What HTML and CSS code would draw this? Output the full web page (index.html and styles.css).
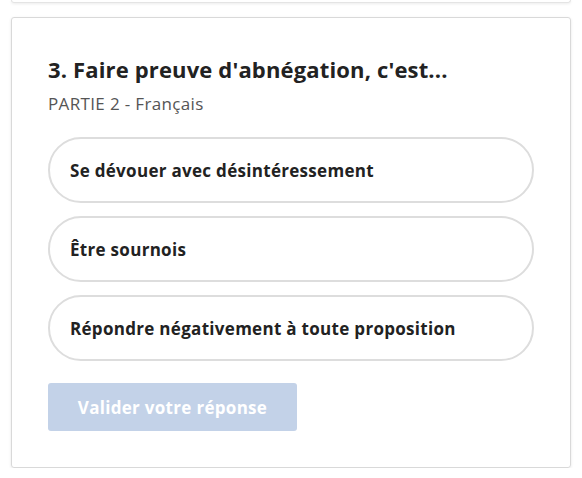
FILE: index.html
```html
<!DOCTYPE html>
<html lang="fr">
<head>
<meta charset="utf-8">
<link rel="stylesheet" href="styles.css">
</head>
<body>
<div class="prev-card"></div>
<section class="card">
  <h2 class="title">3. Faire preuve d'abnégation, c'est...</h2>
  <p class="subtitle">PARTIE 2 - Français</p>
  <div class="options">
    <button class="option">Se dévouer avec désintéressement</button>
    <button class="option">Être sournois</button>
    <button class="option">Répondre négativement à toute proposition</button>
  </div>
  <button class="submit" disabled>Valider votre réponse</button>
</section>
</body>
</html>
```
FILE: styles.css
```css
html, body {
  margin: 0;
  padding: 0;
  background: #fff;
  font-family: "Open Sans", "Noto Sans", sans-serif;
  color: #222;
}
.prev-card {
  height: 2px;
  margin: 0 11px;
  border: 1px solid #e4e4e4;
  border-top: none;
  border-radius: 0 0 3px 3px;
  box-shadow: 0 1px 3px rgba(0,0,0,0.08);
}
.card {
  margin: 14px 11px 0;
  border: 1px solid #d9d9d9;
  border-radius: 3px;
  box-shadow: 0 1px 3px rgba(0,0,0,0.1);
  padding: 37px 36px 36px;
  height: 451px;
  box-sizing: border-box;
}
.title {
  margin: 0;
  font-size: 22px;
  line-height: 28px;
  font-weight: 700;
  letter-spacing: 0.15px;
  color: #222;
}
.subtitle {
  margin: 10px 0 0;
  font-size: 17px;
  line-height: 22px;
  letter-spacing: 0.35px;
  color: #555;
}
.options {
  display: flex;
  flex-direction: column;
  gap: 13px;
  margin-top: 22px;
}
.option {
  height: 66px;
  border: 2px solid #ddd;
  border-radius: 33px;
  background: #fff;
  text-align: left;
  padding: 0 20px;
  font-family: inherit;
  font-size: 17px;
  font-weight: 700;
  letter-spacing: 0.3px;
  color: #222;
}
.submit {
  margin-top: 22px;
  width: 249px;
  height: 48px;
  border: none;
  border-radius: 3px;
  background: #c3d2e8;
  color: #fff;
  font-family: inherit;
  font-size: 17px;
  font-weight: 700;
  letter-spacing: 0.3px;
  display: block;
}
```
